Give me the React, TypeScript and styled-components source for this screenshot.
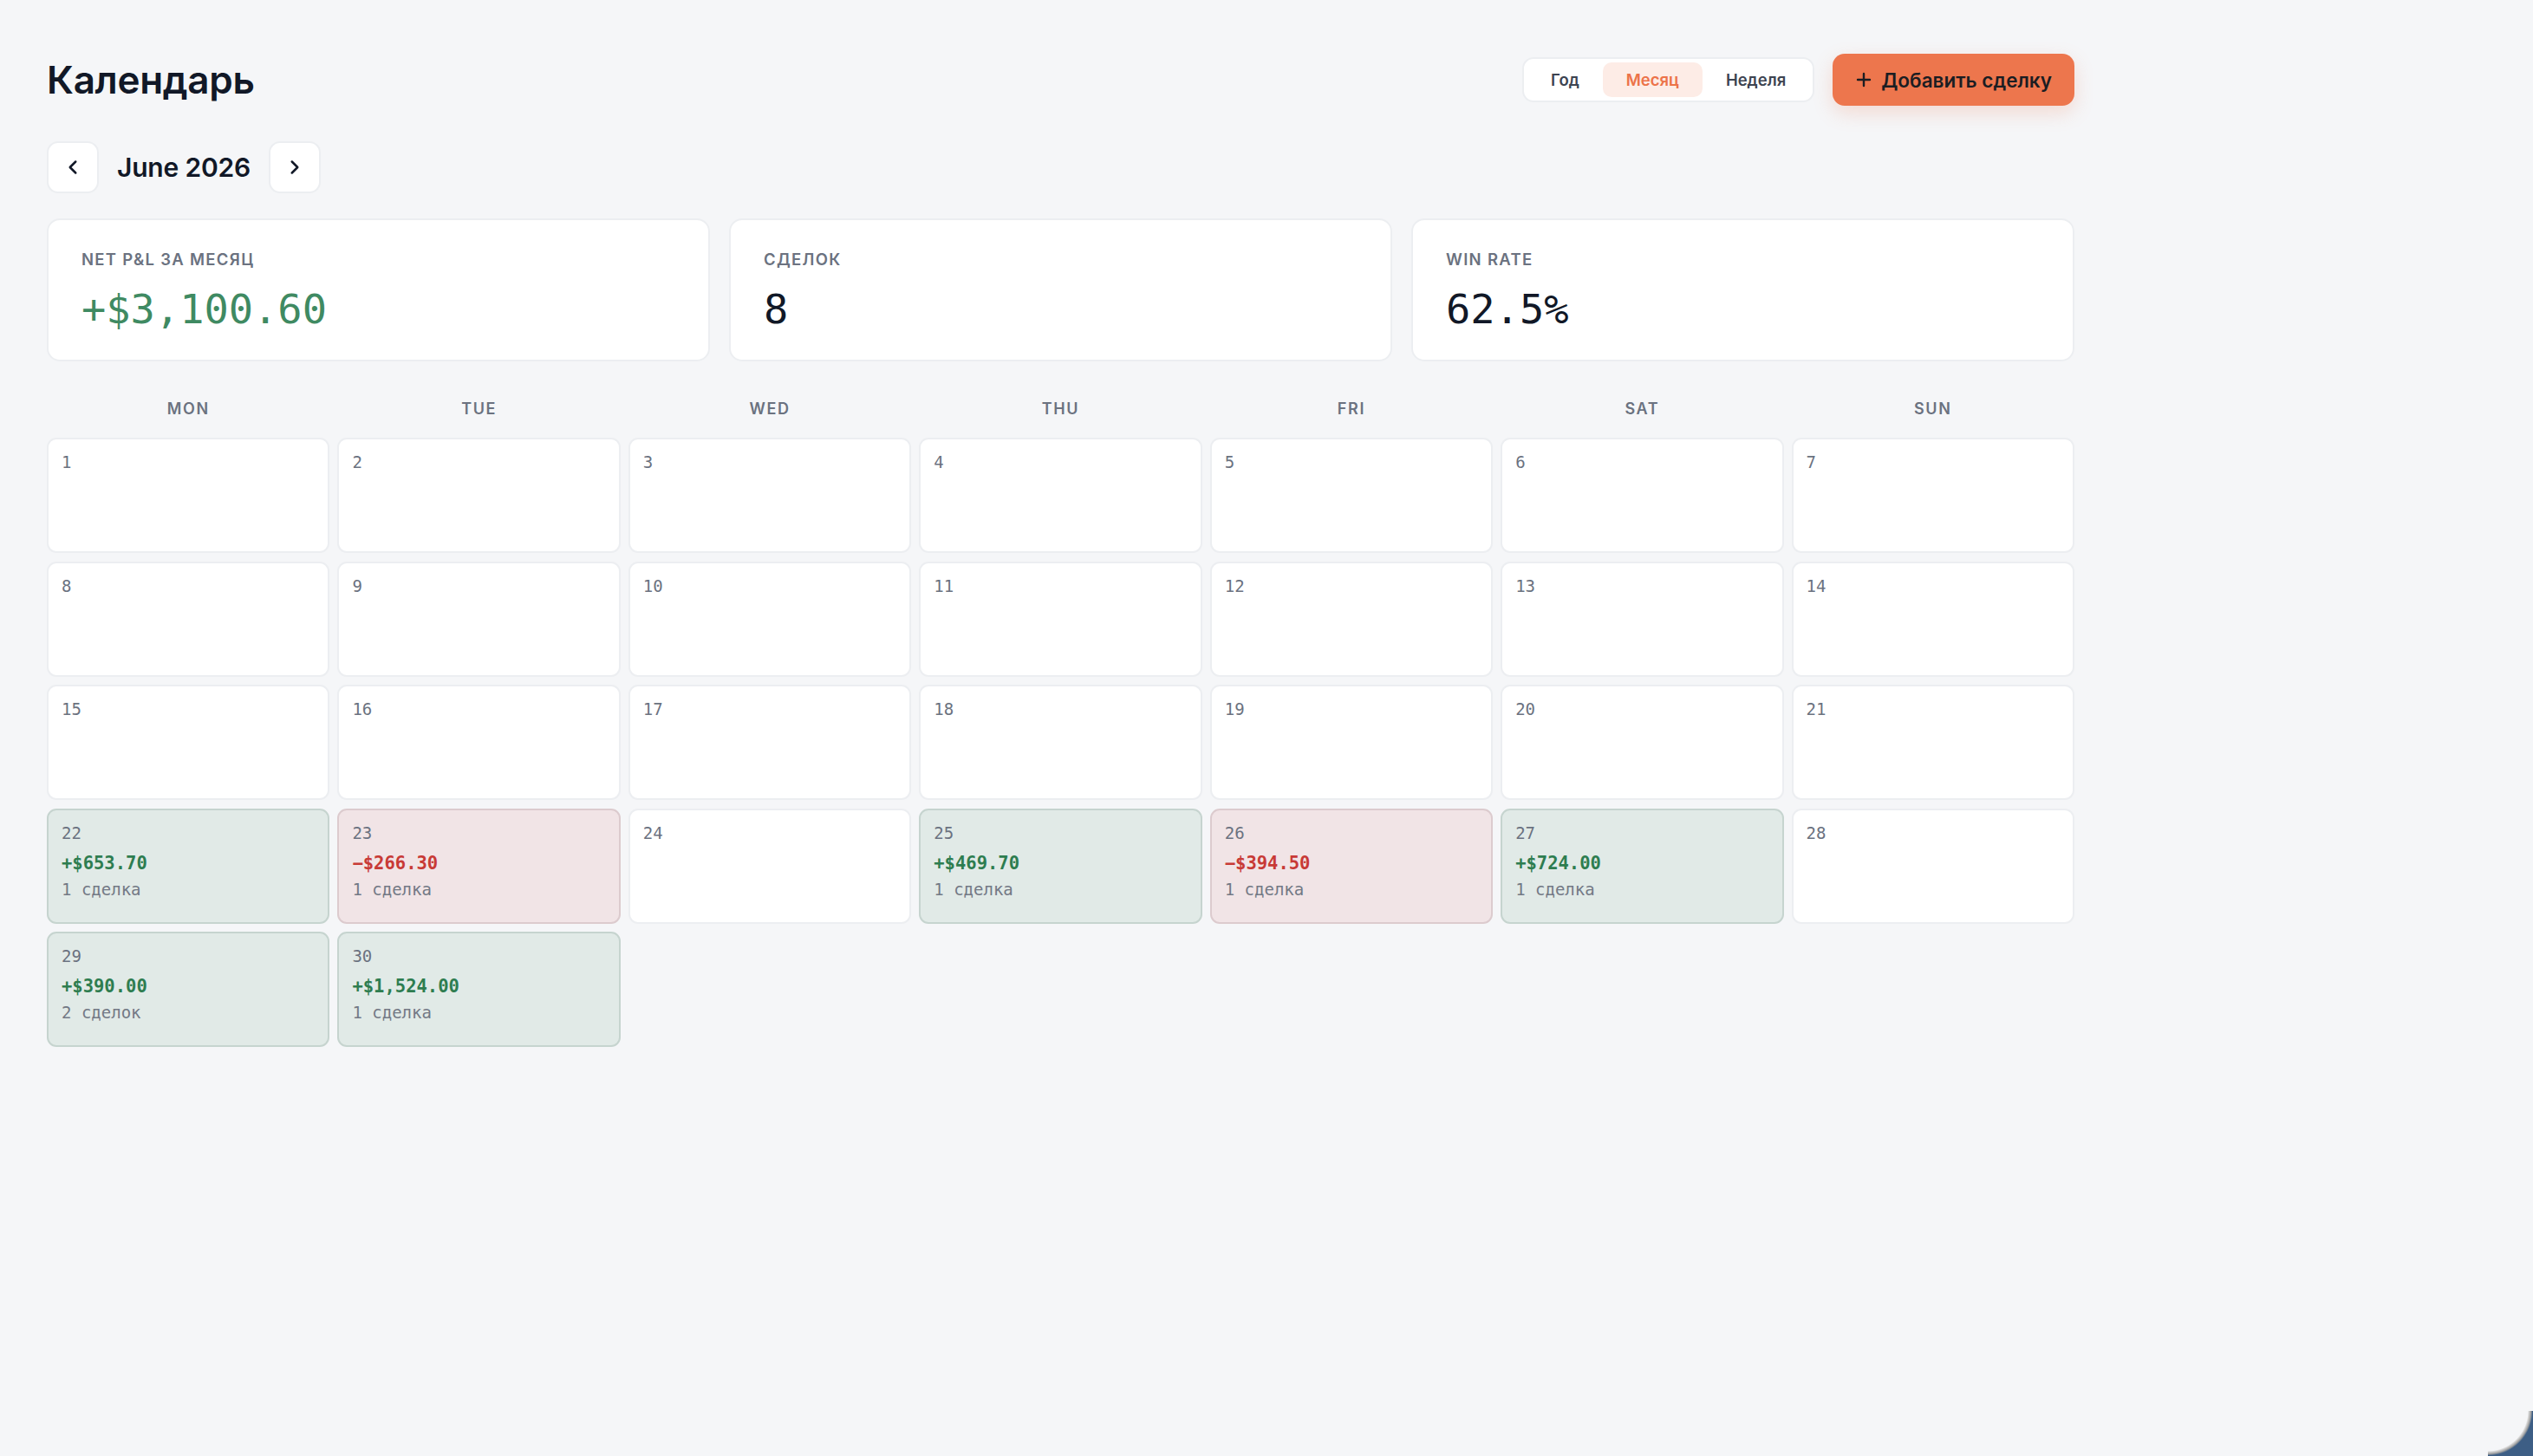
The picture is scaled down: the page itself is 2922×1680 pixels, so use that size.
import React from "react";
import styled, { createGlobalStyle } from "styled-components";
import { ChevronLeft, ChevronRight, Plus } from "lucide-react";

const GlobalStyle = createGlobalStyle`
  html, body { margin: 0; padding: 0; background: #f5f6f8; }
  body { font-family: Inter, "Noto Sans", sans-serif; color: #111827; }
  * { box-sizing: border-box; }
`;

const MONO = `"DejaVu Sans Mono", "Liberation Mono", monospace`;

const Page = styled.div`
  min-height: 100vh;
  padding: 62px 54px 60px;
`;

const Container = styled.div`
  width: 2339px;
  display: flex;
  flex-direction: column;
`;

const Header = styled.header`
  display: flex;
  align-items: center;
  justify-content: space-between;
  height: 60px;
`;

const Title = styled.h1`
  margin: 0;
  font-size: 44px;
  font-weight: 600;
  line-height: 1.2;
  letter-spacing: -0.3px;
  color: #111827;
`;

const HeaderActions = styled.div`
  display: flex;
  align-items: center;
  gap: 21px;
`;

const Segmented = styled.div`
  display: flex;
  align-items: center;
  padding: 4px;
  height: 52px;
  background: #ffffff;
  border: 2px solid #eceef1;
  border-radius: 13px;
`;

const SegButton = styled.button<{ $active?: boolean }>`
  height: 40px;
  padding: 0 27px;
  border: none;
  border-radius: 10px;
  font-family: Inter, sans-serif;
  font-size: 18.5px;
  font-weight: 600;
  cursor: pointer;
  background: ${(p) => (p.$active ? "#fdece6" : "transparent")};
  color: ${(p) => (p.$active ? "#ec7349" : "#3d4451")};
`;

const AddButton = styled.button`
  display: flex;
  align-items: center;
  gap: 8px;
  height: 60px;
  padding: 0 26px 0 24px;
  border: none;
  border-radius: 14px;
  background: #ed764d;
  color: #1b1d22;
  font-family: Inter, sans-serif;
  font-size: 22.5px;
  font-weight: 600;
  box-shadow: 0 8px 22px rgba(237, 118, 77, 0.22);
  cursor: pointer;
`;

const NavRow = styled.div`
  display: flex;
  align-items: center;
  gap: 21px;
  margin-top: 41px;
`;

const NavButton = styled.button`
  width: 60px;
  height: 60px;
  display: flex;
  align-items: center;
  justify-content: center;
  background: #ffffff;
  border: 2px solid #eceef1;
  border-radius: 13px;
  color: #111827;
  cursor: pointer;
  padding: 0;
`;

const MonthLabel = styled.div`
  font-size: 30px;
  font-weight: 600;
  letter-spacing: -0.2px;
  color: #111827;
`;

const Stats = styled.div`
  display: grid;
  grid-template-columns: repeat(3, 1fr);
  gap: 22px;
  margin-top: 29px;
`;

const StatCard = styled.div`
  background: #ffffff;
  border: 2px solid #eceef1;
  border-radius: 15px;
  padding: 34px 38px 30px;
  height: 165px;
`;

const StatLabel = styled.div`
  font-size: 18.5px;
  font-weight: 600;
  line-height: 1.2;
  letter-spacing: 1.3px;
  text-transform: uppercase;
  color: #6b7280;
`;

const StatValue = styled.div<{ $tone?: "pos" | "neutral" }>`
  margin-top: 19px;
  font-family: ${MONO};
  font-size: 47px;
  line-height: 1.2;
  color: ${(p) => (p.$tone === "pos" ? "#3f8a62" : "#111827")};
`;

const WeekHeader = styled.div`
  display: grid;
  grid-template-columns: repeat(7, 1fr);
  column-gap: 9px;
  margin-top: 40px;
`;

const WeekDay = styled.div`
  text-align: center;
  font-size: 18px;
  font-weight: 600;
  line-height: 30px;
  letter-spacing: 1.6px;
  color: #6b7280;
`;

const Grid = styled.div`
  display: grid;
  grid-template-columns: repeat(7, 1fr);
  column-gap: 9px;
  row-gap: 9.5px;
  margin-top: 18px;
`;

type Tone = "pos" | "neg" | "empty";

const Cell = styled.div<{ $tone: Tone }>`
  height: 133px;
  padding: 14px 15px;
  border-radius: 11px;
  border: 2px solid
    ${(p) => (p.$tone === "pos" ? "#c6d4cf" : p.$tone === "neg" ? "#dccbce" : "#eceef1")};
  background: ${(p) => (p.$tone === "pos" ? "#e1eae7" : p.$tone === "neg" ? "#f1e4e6" : "#ffffff")};
  font-family: ${MONO};
`;

const DayNum = styled.div`
  font-size: 19px;
  line-height: 24px;
  color: #6b7280;
`;

const DayPnl = styled.div<{ $neg?: boolean }>`
  margin-top: 10px;
  font-size: 20.5px;
  line-height: 26px;
  font-weight: 700;
  color: ${(p) => (p.$neg ? "#c83a36" : "#2e7d50")};
`;

const DayCount = styled.div`
  margin-top: 5px;
  font-size: 19px;
  line-height: 24px;
  color: #737985;
`;

const BlankCell = styled.div``;

const WindowCorner = styled.div`
  position: fixed;
  right: 0;
  bottom: 0;
  width: 52px;
  height: 52px;
  pointer-events: none;
  background: radial-gradient(
    circle 52px at 0 0,
    transparent 46px,
    #dadada 47px,
    #a2a2a2 49.5px,
    #3d5e85 51.5px
  );
`;

const weekdays = ["MON", "TUE", "WED", "THU", "FRI", "SAT", "SUN"];

const trades: Record<number, { pnl: string; count: string; neg?: boolean }> = {
  22: { pnl: "+$653.70", count: "1 сделка" },
  23: { pnl: "−$266.30", count: "1 сделка", neg: true },
  25: { pnl: "+$469.70", count: "1 сделка" },
  26: { pnl: "−$394.50", count: "1 сделка", neg: true },
  27: { pnl: "+$724.00", count: "1 сделка" },
  29: { pnl: "+$390.00", count: "2 сделок" },
  30: { pnl: "+$1,524.00", count: "1 сделка" },
};

export default function App() {
  const days = Array.from({ length: 30 }, (_, i) => i + 1);
  return (
    <Page>
      <GlobalStyle />
      <Container>
        <Header>
          <Title>Календарь</Title>
          <HeaderActions>
            <Segmented>
              <SegButton>Год</SegButton>
              <SegButton $active>Месяц</SegButton>
              <SegButton>Неделя</SegButton>
            </Segmented>
            <AddButton>
              <Plus size={24} strokeWidth={2.4} />
              Добавить сделку
            </AddButton>
          </HeaderActions>
        </Header>

        <NavRow>
          <NavButton aria-label="prev">
            <ChevronLeft size={26} strokeWidth={2.3} />
          </NavButton>
          <MonthLabel>June 2026</MonthLabel>
          <NavButton aria-label="next">
            <ChevronRight size={26} strokeWidth={2.3} />
          </NavButton>
        </NavRow>

        <Stats>
          <StatCard>
            <StatLabel>Net P&amp;L за месяц</StatLabel>
            <StatValue $tone="pos">+$3,100.60</StatValue>
          </StatCard>
          <StatCard>
            <StatLabel>Сделок</StatLabel>
            <StatValue>8</StatValue>
          </StatCard>
          <StatCard>
            <StatLabel>Win rate</StatLabel>
            <StatValue>62.5%</StatValue>
          </StatCard>
        </Stats>

        <WeekHeader>
          {weekdays.map((d) => (
            <WeekDay key={d}>{d}</WeekDay>
          ))}
        </WeekHeader>

        <Grid>
          {days.map((d) => {
            const t = trades[d];
            const tone: Tone = t ? (t.neg ? "neg" : "pos") : "empty";
            return (
              <Cell key={d} $tone={tone}>
                <DayNum>{d}</DayNum>
                {t && (
                  <>
                    <DayPnl $neg={t.neg}>{t.pnl}</DayPnl>
                    <DayCount>{t.count}</DayCount>
                  </>
                )}
              </Cell>
            );
          })}
          {[0, 1, 2, 3, 4].map((i) => (
            <BlankCell key={`b${i}`} />
          ))}
        </Grid>
      </Container>
      <WindowCorner />
    </Page>
  );
}
